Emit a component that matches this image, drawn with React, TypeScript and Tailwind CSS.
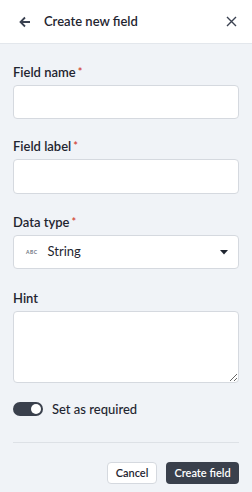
import { useState } from 'react'

function Label({ text, required }: { text: string; required?: boolean }) {
  return (
    <label className="block text-[13px] font-semibold leading-[18px] text-[#1f2530] mb-[4px]">
      {text}
      {required && <span className="text-[#d23f31] ml-[2px] text-[11px] align-top">*</span>}
    </label>
  )
}

export default function App() {
  const [required, setRequired] = useState(true)

  return (
    <div
      className="w-[252px] h-[492px] bg-[#f0f3f7] flex flex-col text-[#1f2530]"
      style={{ fontFamily: 'Lato, "Open Sans", sans-serif' }}
    >
      <div className="h-[44px] shrink-0 bg-white border-b border-[#e3e7ec] flex items-center px-[19px]">
        <svg width="12" height="12" viewBox="0 0 12 12" className="text-[#3a4150]">
          <path d="M11 6H2M6 1.5L1.5 6L6 10.5" fill="none" stroke="currentColor" strokeWidth="1.8" />
        </svg>
        <span className="ml-[13px] text-[13px] font-semibold">Create new field</span>
        <svg width="11" height="11" viewBox="0 0 11 11" className="ml-auto mr-[-4px] text-[#3a4150]">
          <path d="M1 1L10 10M10 1L1 10" fill="none" stroke="currentColor" strokeWidth="1.4" />
        </svg>
      </div>

      <div className="flex-1 px-[13px] pt-[19px] flex flex-col">
        <Label text="Field name" required />
        <input className="h-[34px] shrink-0 w-full bg-white border border-[#d5d9df] rounded-[4px] outline-none" />

        <div className="mt-[18px]">
          <Label text="Field label" required />
          <input className="h-[35px] w-full bg-white border border-[#d5d9df] rounded-[4px] outline-none" />
        </div>

        <div className="mt-[19px]">
          <Label text="Data type" required />
          <div className="h-[34px] w-full bg-white border border-[#d5d9df] rounded-[4px] flex items-center pl-[12px] pr-[10px]">
            <span className="text-[5px] font-bold tracking-[0.5px] text-[#6b7280] leading-none">ABC</span>
            <span className="ml-[10px] text-[13px]">String</span>
            <svg width="8" height="5" viewBox="0 0 8 5" className="ml-auto">
              <path d="M0 0H8L4 4.5Z" fill="#1f2530" />
            </svg>
          </div>
        </div>

        <div className="mt-[20px]">
          <Label text="Hint" />
          <textarea className="h-[72px] w-full bg-white border border-[#d5d9df] rounded-[4px] outline-none block resize-y" />
        </div>

        <div className="mt-[17px] h-[18px] flex items-center">
          <button
            onClick={() => setRequired(!required)}
            className={`w-[30px] h-[14px] rounded-full flex items-center px-[2px] ${
              required ? 'bg-[#3a404c] justify-end' : 'bg-[#c4c9d0] justify-start'
            }`}
          >
            <span className="w-[10px] h-[10px] rounded-full bg-white" />
          </button>
          <span className="ml-[9px] text-[13px] leading-[18px] font-medium">Set as required</span>
        </div>

        <div className="mt-[24px] border-t border-[#dde1e6]" />

        <div className="mt-[19px] flex justify-end gap-[9px]">
          <button className="h-[22px] w-[50px] bg-white border border-[#d5d9df] rounded-[4px] text-[11px] font-semibold">
            Cancel
          </button>
          <button className="h-[22px] w-[73px] bg-[#3a404c] text-white rounded-[4px] text-[11px] font-semibold">
            Create field
          </button>
        </div>
      </div>
    </div>
  )
}
